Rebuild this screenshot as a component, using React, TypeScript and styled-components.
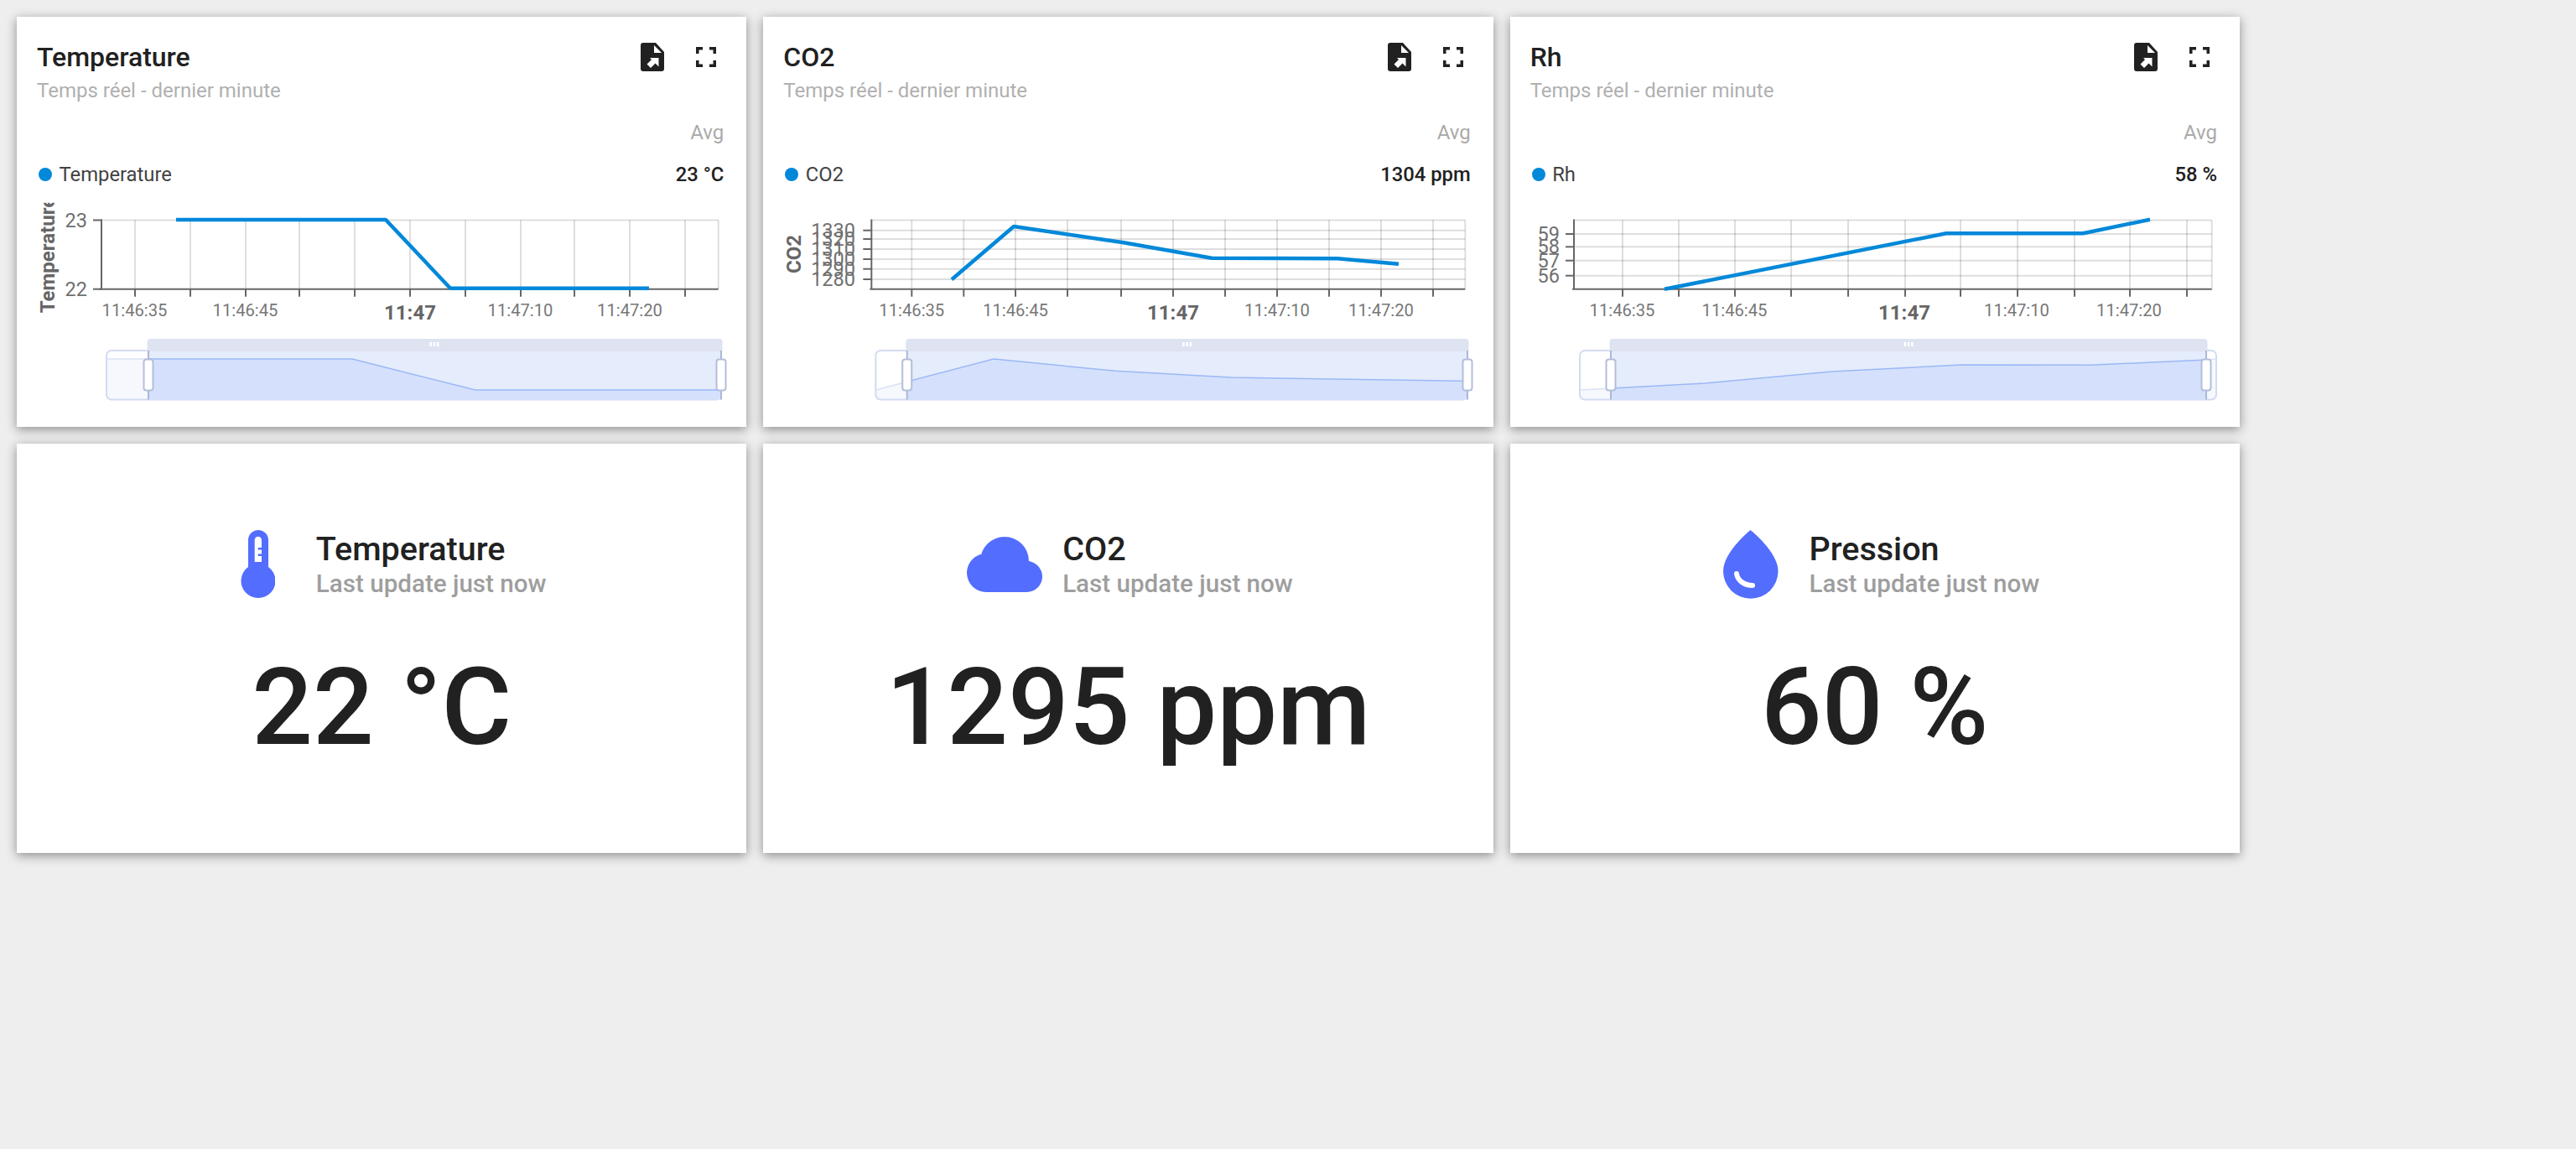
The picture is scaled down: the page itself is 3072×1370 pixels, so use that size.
import React from "react";
import styled, { createGlobalStyle } from "styled-components";

const GlobalStyle = createGlobalStyle`
  html, body {
    margin: 0;
    padding: 0;
    background: #eeeeee;
    font-family: Roboto, "Liberation Sans", sans-serif;
  }
`;

const Page = styled.div`
  display: grid;
  grid-template-columns: repeat(3, 870.33px);
  grid-auto-rows: 488.5px;
  gap: 20px;
  padding: 20px;
  height: 1370px;
  box-sizing: border-box;
`;

const Card = styled.section`
  background: #fff;
  box-shadow: 0 3px 12px rgba(0, 0, 0, 0.42);
  box-sizing: border-box;
  overflow: hidden;
`;

const ChartHead = styled.header`
  display: flex;
  justify-content: space-between;
  padding: 28px 36px 0 24px;
`;

const Title = styled.h2`
  margin: 0;
  font-size: 32px;
  line-height: 40px;
  font-weight: 500;
  color: #212121;
`;

const Subtitle = styled.div`
  margin-top: 4px;
  font-size: 24px;
  line-height: 32px;
  color: #b0b0b0;
`;

const Tools = styled.div`
  display: flex;
  gap: 38px;
  align-items: flex-start;
  padding-top: 3px;
`;

const Avg = styled.div`
  margin-top: 18px;
  padding-right: 27px;
  text-align: right;
  font-size: 24px;
  line-height: 32px;
  color: #aaaaaa;
`;

const LegendRow = styled.div`
  display: flex;
  align-items: center;
  margin-top: 18px;
  padding: 0 27px 0 26px;
  font-size: 23.8px;
  line-height: 32px;
  color: #424242;
`;

const Dot = styled.span`
  width: 16px;
  height: 16px;
  border-radius: 50%;
  background: #0288d9;
  margin-right: 8.5px;
`;

const LegendValue = styled.span`
  margin-left: auto;
  font-weight: 500;
  color: #212121;
`;

const ChartSvg = styled.svg`
  display: block;
  margin-top: 12px;
  width: 870px;
  height: 264px;
`;

const GridLine = styled.line`
  stroke: rgba(0, 0, 0, 0.13);
  stroke-width: 2;
`;

const AxisLine = styled.line`
  stroke: #666666;
  stroke-width: 2;
`;

const YLabel = styled.text`
  font-size: 23.5px;
  fill: #707070;
  text-anchor: end;
`;

const XLabel = styled.text<{ $major?: boolean }>`
  font-size: ${(p) => (p.$major ? "24px" : "20.2px")};
  font-weight: ${(p) => (p.$major ? 700 : 400)};
  fill: ${(p) => (p.$major ? "#666666" : "#777777")};
  text-anchor: middle;
`;

const AxisTitle = styled.text`
  font-size: 24px;
  font-weight: 700;
  fill: #666666;
  text-anchor: middle;
`;

const SeriesLine = styled.polyline`
  fill: none;
  stroke: #0288d9;
  stroke-width: 4.5;
  stroke-linejoin: bevel;
`;

const StatHead = styled.div`
  display: flex;
  justify-content: center;
  padding-top: 103.5px;
`;

const IconBox = styled.div`
  width: 98px;
  height: 84px;
  margin-right: 20px;
  display: flex;
  justify-content: center;
`;

const StatTitle = styled.div`
  margin-top: 1px;
  font-size: 39.5px;
  line-height: 44px;
  font-weight: 500;
  color: #212121;
`;

const StatSub = styled.div`
  font-size: 29.6px;
  line-height: 38px;
  font-weight: 500;
  color: #9e9e9e;
`;

const StatValue = styled.div`
  margin-top: 57px;
  text-align: center;
  font-size: 128px;
  line-height: 140px;
  font-weight: 500;
  color: #212121;
`;

const FileIcon = () => (
  <svg width="28" height="34" viewBox="0 0 28 34">
    <path d="M3 0H18L28 11V31a3 3 0 0 1-3 3H3a3 3 0 0 1-3-3V3a3 3 0 0 1 3-3z" fill="#212121" />
    <path d="M16 3L25 12H16z" fill="#fff" />
    <path d="M11 18H21.5V28.5L17.5 24.5L12 30L7.5 25.5L13 20z" fill="#fff" />
  </svg>
);

const FullscreenIcon = () => (
  <svg width="24" height="24" viewBox="0 0 24 24" style={{ marginTop: 5 }}>
    <path
      d="M0 8V0H8V3.5H3.5V8zM16 0H24V8H20.5V3.5H16zM20.5 16H24V24H16V20.5H20.5zM0 16H3.5V20.5H8V24H0z"
      fill="#212121"
    />
  </svg>
);

const ThermometerIcon = () => (
  <svg width="41" height="82" viewBox="0 0 41 82">
    <path d="M9 12a12 12 0 0 1 24 0V44a20.5 20.5 0 1 1-24 0z" fill="#536dfe" />
    <path d="M16.7 12a4.1 4.1 0 0 1 8.3 0V38H16.7z" fill="#fff" />
    <rect x="20.7" y="21" width="4.5" height="2.5" fill="#536dfe" />
    <rect x="20.7" y="28.5" width="4.5" height="2.5" fill="#536dfe" />
  </svg>
);

const CloudIcon = () => (
  <svg width="90" height="66" viewBox="0 0 90 66" style={{ marginTop: 8 }}>
    <g fill="#536dfe">
      <circle cx="45" cy="29" r="29" />
      <circle cx="23" cy="43" r="23" />
      <circle cx="71.5" cy="47.5" r="18.5" />
      <rect x="23" y="40" width="48" height="26" />
    </g>
  </svg>
);

const DropIcon = () => (
  <svg width="66" height="82" viewBox="0 0 66 82">
    <path d="M32.5 0C32.5 0 65.5 26 65.5 49A32.7 32.7 0 0 1 0 49C0 26 32.5 0 32.5 0z" fill="#536dfe" />
    <path d="M16 52C17 60 25 66 35 66" fill="none" stroke="#fff" strokeWidth="6" strokeLinecap="round" />
  </svg>
);

type ChartProps = {
  id: string;
  originX: number;
  axisX: number;
  rightX: number;
  ticks: number[];
  labelX: number;
  yTicks: { y: number; label: string }[];
  axisTitle?: { x: number; y: number; text: string };
  xLabels: { x: number; text: string; major?: boolean }[];
  line: string;
  brush: {
    left: number;
    right: number;
    selLeft: number;
    selRight: number;
    grip: number;
    data: [number, number][];
  };
};

const PLOT_TOP = 262.5;
const PLOT_BOTTOM = 344.7;
const BRUSH_TOP = 418;
const BRUSH_BOTTOM = 476.5;

function Brush({ id, brush }: { id: string; brush: ChartProps["brush"] }) {
  const { left, right, selLeft, selRight, grip, data } = brush;
  const pts = data.map((p) => p.join(",")).join(" ");
  const area = `${left},${BRUSH_BOTTOM} ${pts} ${right},${BRUSH_BOTTOM}`;
  return (
    <g>
      <defs>
        <clipPath id={id + "-sel"}>
          <rect x={selLeft} y={BRUSH_TOP} width={selRight - selLeft} height={BRUSH_BOTTOM - BRUSH_TOP} />
        </clipPath>
      </defs>
      <polygon points={area} fill="#f6f8fd" />
      <rect x={left} y={BRUSH_TOP} width={right - left} height={BRUSH_BOTTOM - BRUSH_TOP} rx="6" fill="none" stroke="#d2dbf0" strokeWidth="2" />
      <polyline points={pts} fill="none" stroke="#d8e2f6" strokeWidth="1.5" />
      <g clipPath={`url(#${id}-sel)`}>
        <rect x={selLeft} y={BRUSH_TOP} width={selRight - selLeft} height={BRUSH_BOTTOM - BRUSH_TOP} fill="#e5ecfc" />
        <polygon points={area} fill="#d5e1fc" />
        <polyline points={pts} fill="none" stroke="#9bb8f5" strokeWidth="1.5" />
      </g>
      <path
        d={`M${selLeft - 1.5} ${BRUSH_TOP + 1}V408a4 4 0 0 1 4-4H${selRight - 2.5}a4 4 0 0 1 4 4V${BRUSH_TOP + 1}z`}
        fill="#dee3f1"
      />
      <rect x={grip - 5.5} y="408" width="2.5" height="5" fill="#fff" />
      <rect x={grip - 1.25} y="408" width="2.5" height="5" fill="#fff" />
      <rect x={grip + 3} y="408" width="2.5" height="5" fill="#fff" />
      {[selLeft, selRight].map((x) => (
        <g key={x}>
          <line x1={x} x2={x} y1={BRUSH_TOP} y2={BRUSH_BOTTOM} stroke="#aab7d6" strokeWidth="2" />
          <rect x={x - 5.5} y="428.5" width="11" height="37" rx="3" fill="#fff" stroke="#b3bedb" strokeWidth="2" />
        </g>
      ))}
    </g>
  );
}

function Chart(props: ChartProps) {
  const { id, originX, axisX, rightX, ticks, labelX, yTicks, axisTitle, xLabels, line, brush } = props;
  return (
    <ChartSvg viewBox={`${originX} 236 870 264`}>
      <defs>
        <clipPath id={id + "-title"}>
          <rect x={originX} y="241.7" width="100" height="200" />
        </clipPath>
      </defs>
      <GridLine x1={axisX} x2={rightX} y1={PLOT_TOP} y2={PLOT_TOP} />
      {yTicks
        .filter((t) => t.y < PLOT_BOTTOM - 1 && t.y > PLOT_TOP + 1)
        .map((t) => (
          <GridLine key={t.y} x1={axisX} x2={rightX} y1={t.y} y2={t.y} />
        ))}
      <GridLine x1={rightX} x2={rightX} y1={PLOT_TOP} y2={PLOT_BOTTOM} />
      {ticks.map((x) => (
        <GridLine key={x} x1={x} x2={x} y1={PLOT_TOP} y2={PLOT_BOTTOM} />
      ))}
      <AxisLine x1={axisX} x2={axisX} y1={PLOT_TOP - 1} y2={PLOT_BOTTOM} />
      <AxisLine x1={axisX - 2} x2={rightX} y1={PLOT_BOTTOM} y2={PLOT_BOTTOM} />
      {ticks.map((x) => (
        <AxisLine key={x} x1={x} x2={x} y1={PLOT_BOTTOM} y2={PLOT_BOTTOM + 9} />
      ))}
      {yTicks.map((t) => (
        <AxisLine key={t.y} x1={axisX - 10} x2={axisX} y1={t.y} y2={t.y} />
      ))}
      {yTicks.map((t) => (
        <YLabel key={t.y} x={labelX} y={t.y + 8}>
          {t.label}
        </YLabel>
      ))}
      {axisTitle && (
        <g clipPath={`url(#${id}-title)`}>
          <AxisTitle transform={`translate(${axisTitle.x} ${axisTitle.y}) rotate(-90)`}>{axisTitle.text}</AxisTitle>
        </g>
      )}
      {xLabels.map((l) => (
        <XLabel key={l.text} x={l.x} y={l.major ? 380.5 : 377} $major={l.major}>
          {l.text}
        </XLabel>
      ))}
      <SeriesLine points={line} />
      <Brush id={id} brush={brush} />
    </ChartSvg>
  );
}

const charts: (ChartProps & { title: string; value: string; legend: string })[] = [
  {
    id: "temp",
    title: "Temperature",
    legend: "Temperature",
    value: "23 °C",
    originX: 20,
    axisX: 121,
    rightX: 856.7,
    ticks: [161, 227, 293, 357, 423, 489, 555, 621, 685, 751, 817],
    labelX: 104,
    yTicks: [
      { y: 262.5, label: "23" },
      { y: 344.7, label: "22" },
    ],
    axisTitle: { x: 65, y: 304, text: "Temperature" },
    xLabels: [
      { x: 160.5, text: "11:46:35" },
      { x: 292.5, text: "11:46:45" },
      { x: 489, text: "11:47", major: true },
      { x: 620.5, text: "11:47:10" },
      { x: 751, text: "11:47:20" },
    ],
    line: "210,262 460,262 537,343.7 774,343.7",
    brush: {
      left: 127,
      right: 860,
      selLeft: 177,
      selRight: 860,
      grip: 518,
      data: [
        [127, 428],
        [420, 428],
        [567, 465],
        [860, 465],
      ],
    },
  },
  {
    id: "co2",
    title: "CO2",
    legend: "CO2",
    value: "1304 ppm",
    originX: 910,
    axisX: 1039.3,
    rightX: 1747.3,
    ticks: [1087.3, 1149.3, 1211, 1273, 1337, 1399, 1461, 1523, 1585, 1647, 1709],
    labelX: 1020,
    yTicks: [
      { y: 274.7, label: "1330" },
      { y: 285, label: "1320" },
      { y: 297, label: "1310" },
      { y: 309, label: "1300" },
      { y: 320.7, label: "1290" },
      { y: 333, label: "1280" },
    ],
    axisTitle: { x: 955, y: 303, text: "CO2" },
    xLabels: [
      { x: 1087.3, text: "11:46:35" },
      { x: 1211, text: "11:46:45" },
      { x: 1399, text: "11:47", major: true },
      { x: 1523, text: "11:47:10" },
      { x: 1647, text: "11:47:20" },
    ],
    line: "1135,333.3 1209,270 1340,289.3 1445,307.7 1595,308.3 1668,314.7",
    brush: {
      left: 1044.3,
      right: 1750,
      selLeft: 1081.7,
      selRight: 1750,
      grip: 1415.7,
      data: [
        [1044.3, 465],
        [1185, 428],
        [1330, 442.3],
        [1468, 450],
        [1743, 454.3],
        [1750, 454.6],
      ],
    },
  },
  {
    id: "rh",
    title: "Rh",
    legend: "Rh",
    value: "58 %",
    originX: 1800,
    axisX: 1876,
    rightX: 2636.7,
    ticks: [1934, 2001, 2068, 2135, 2203, 2271, 2337, 2405, 2473, 2539, 2607],
    labelX: 1859,
    yTicks: [
      { y: 279, label: "59" },
      { y: 294.3, label: "58" },
      { y: 310.7, label: "57" },
      { y: 328.7, label: "56" },
    ],
    xLabels: [
      { x: 1933.5, text: "11:46:35" },
      { x: 2067.5, text: "11:46:45" },
      { x: 2270, text: "11:47", major: true },
      { x: 2404, text: "11:47:10" },
      { x: 2538, text: "11:47:20" },
    ],
    line: "1984,344.8 2320,278.3 2483,278.3 2563,261.7",
    brush: {
      left: 1883,
      right: 2642,
      selLeft: 1920,
      selRight: 2630,
      grip: 2275,
      data: [
        [1883, 465],
        [2032, 457],
        [2184, 443],
        [2338, 435],
        [2492, 435.3],
        [2630, 429],
        [2642, 428],
      ],
    },
  },
];

const stats = [
  { title: "Temperature", value: "22 °C", icon: <ThermometerIcon /> },
  { title: "CO2", value: "1295 ppm", icon: <CloudIcon /> },
  { title: "Pression", value: "60 %", icon: <DropIcon /> },
];

export default function App() {
  return (
    <>
      <GlobalStyle />
      <Page>
        {charts.map(({ title, legend, value, ...chart }) => (
          <Card key={chart.id}>
            <ChartHead>
              <div>
                <Title>{title}</Title>
                <Subtitle>Temps réel - dernier minute</Subtitle>
              </div>
              <Tools>
                <FileIcon />
                <FullscreenIcon />
              </Tools>
            </ChartHead>
            <Avg>Avg</Avg>
            <LegendRow>
              <Dot />
              {legend}
              <LegendValue>{value}</LegendValue>
            </LegendRow>
            <Chart {...chart} />
          </Card>
        ))}
        {stats.map((s) => (
          <Card key={s.title + s.value}>
            <StatHead>
              <IconBox>{s.icon}</IconBox>
              <div>
                <StatTitle>{s.title}</StatTitle>
                <StatSub>Last update just now</StatSub>
              </div>
            </StatHead>
            <StatValue>{s.value}</StatValue>
          </Card>
        ))}
      </Page>
    </>
  );
}
